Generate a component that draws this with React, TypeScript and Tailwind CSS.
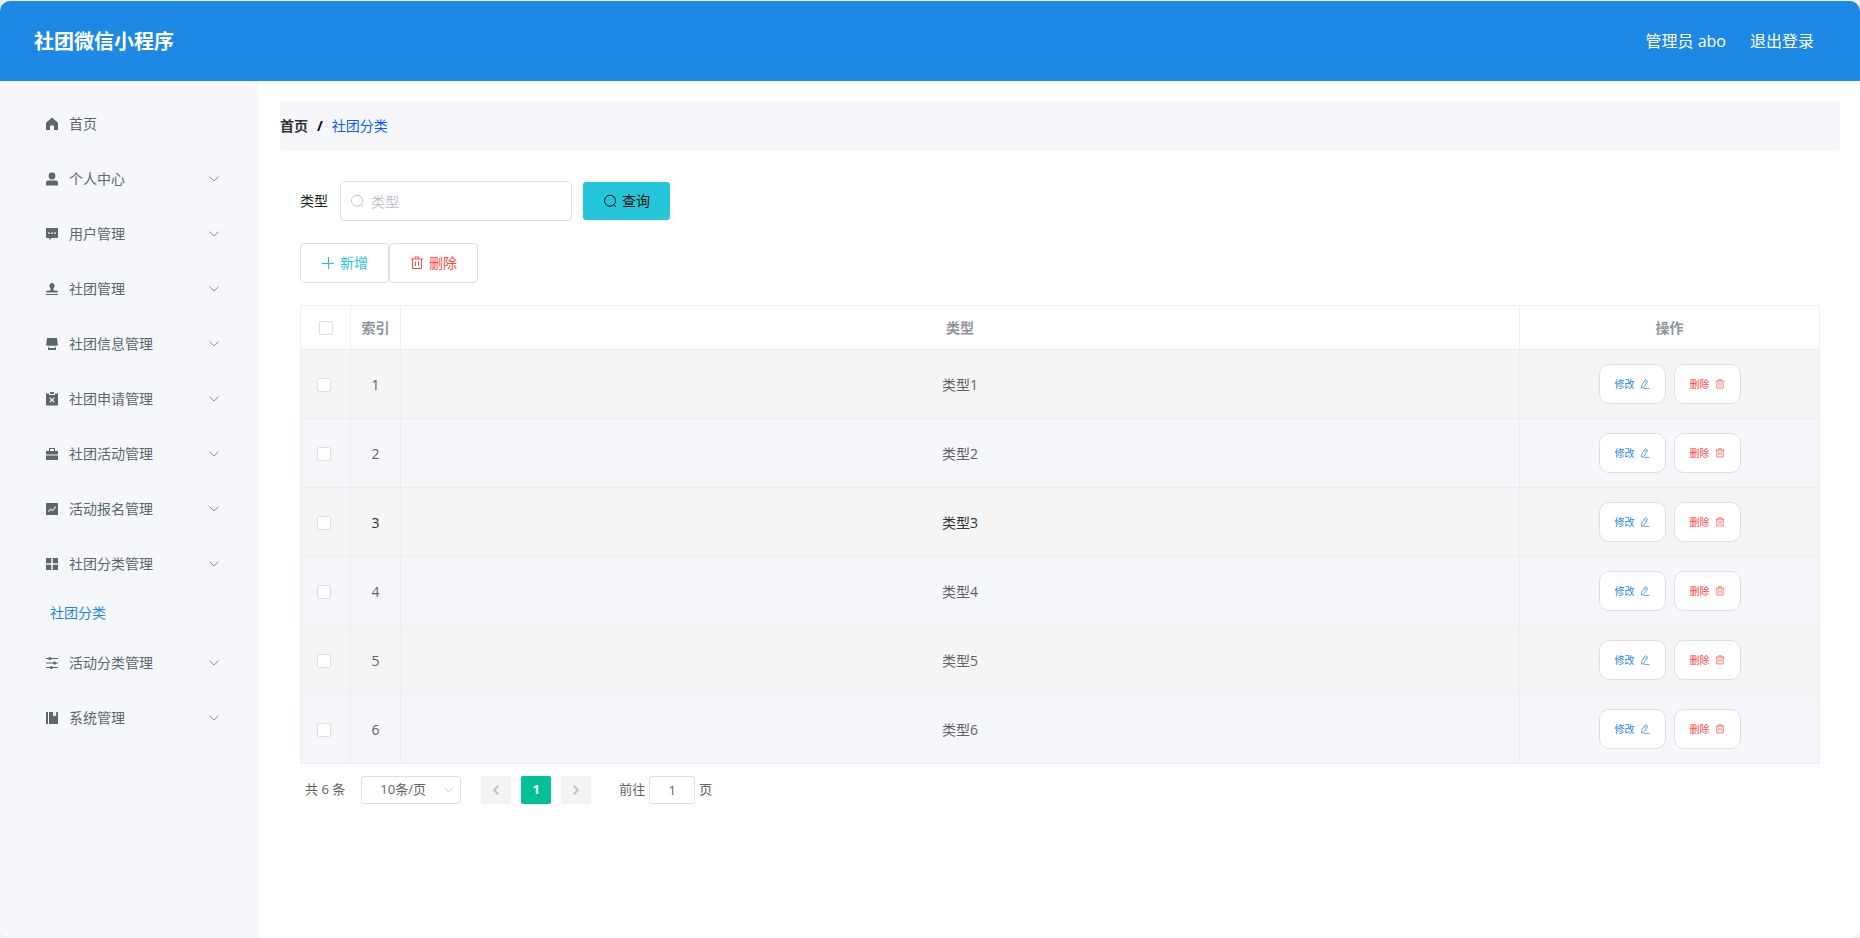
import type { ReactNode } from "react";

const ROWS = [1, 2, 3, 4, 5, 6];

function HomeIcon() {
  return <path d="M6 -0.4 0 4.8V12H4V8.2a0.6 0.6 0 0 1 .6-.6H7.4a0.6 0.6 0 0 1 .6.6V12H12V4.8Z" />;
}

function UserIcon() {
  return (
    <>
      <circle cx="6" cy="3" r="3.4" />
      <path d="M0 12.4V9.8A2.2 2.2 0 0 1 2.2 7.6H9.8A2.2 2.2 0 0 1 12 9.8V12.4Z" />
    </>
  );
}

function CommentIcon() {
  return (
    <path
      fillRule="evenodd"
      d="M0 0H12V10H6L3.2 12V10H0ZM2.3 4.3V5.9H3.7V4.3ZM5.3 4.3V5.9H6.7V4.3ZM8.3 4.3V5.9H9.7V4.3Z"
    />
  );
}

function StampIcon() {
  return (
    <path d="M6 0A2.9 2.9 0 0 0 4.5 5.2V7.6H2A2 2 0 0 0 0 9.6H12A2 2 0 0 0 10 7.6H7.5V5.2A2.9 2.9 0 0 0 6 0ZM0 11H12V12H0Z" />
  );
}

function GoodsIcon() {
  return (
    <path
      d="M1 0H11L12 7.6H9.8L9.2 8.4 8.6 7.6H7.8L7.2 8.4 6.6 7.6H5.6L5 8.4 4.4 7.6H3.6L3 8.4 2.4 7.6H0ZM2 9.2H3V10H9V9.2H10V12H2Z"
    />
  );
}

function ClaimIcon() {
  return (
    <>
      <path d="M4-1H8V1H4Z" />
      <path
        fillRule="evenodd"
        d="M0 0.6H3V2H9V0.6H12V12.4H0ZM3.3 5 5.1 7 3.3 9 4.1 9.8 6 7.8 7.9 9.8 8.7 9 6.9 7 8.7 5 7.9 4.2 6 6.2 4.1 4.2Z"
      />
    </>
  );
}

function CaseIcon() {
  return (
    <path
      fillRule="evenodd"
      d="M3 0H9V3H12V6.4H0V3H3ZM4.1 1.1V3H7.9V1.1ZM0 7.4H12V12H0Z"
    />
  );
}

function MarketingIcon() {
  return (
    <path
      fillRule="evenodd"
      d="M0 0H12V12H0ZM2 8.2 2.7 9 4.9 6.8 6.6 8.2 9 5.2 9.4 5.6 10 3.6 8 4 8.5 4.4 6.4 6.9 4.8 5.6Z"
    />
  );
}

function MenuIcon() {
  return <path d="M0 0H5.2V5.2H0ZM6.8 0H12V5.2H6.8ZM0 6.8H5.2V12H0ZM6.8 6.8H12V12H6.8Z" />;
}

function OperationIcon() {
  return (
    <>
      <path d="M0 1H12V2H0ZM0 5.5H12V6.5H0ZM0 10H12V11H0Z" />
      <circle cx="4" cy="1.5" r="1.5" />
      <circle cx="8.6" cy="6" r="1.5" />
      <circle cx="5.4" cy="10.5" r="1.5" />
    </>
  );
}

function ManagementIcon() {
  return <path d="M0 0H2V12H0ZM3 0H7V4.6L8.6 3.4 10.2 4.6V0H12V12H3Z" />;
}

const MENU: { label: string; icon: ReactNode; leaf?: boolean; children?: string[] }[] = [
  { label: "首页", icon: <HomeIcon />, leaf: true },
  { label: "个人中心", icon: <UserIcon /> },
  { label: "用户管理", icon: <CommentIcon /> },
  { label: "社团管理", icon: <StampIcon /> },
  { label: "社团信息管理", icon: <GoodsIcon /> },
  { label: "社团申请管理", icon: <ClaimIcon /> },
  { label: "社团活动管理", icon: <CaseIcon /> },
  { label: "活动报名管理", icon: <MarketingIcon /> },
  { label: "社团分类管理", icon: <MenuIcon />, children: ["社团分类"] },
  { label: "活动分类管理", icon: <OperationIcon /> },
  { label: "系统管理", icon: <ManagementIcon /> },
];

function Chevron({ className }: { className: string }) {
  return (
    <svg viewBox="0 0 10 6" fill="none" stroke="currentColor" className={className} aria-hidden="true">
      <path d="M0.5 0.6 5 5 9.5 0.6" />
    </svg>
  );
}

function SearchIcon() {
  return (
    <svg viewBox="0 0 14 14" fill="none" stroke="currentColor" className="size-[14px]" aria-hidden="true">
      <circle cx="7" cy="6.7" r="5.5" />
      <path d="M11 10.8 12.8 12.8" />
    </svg>
  );
}

function TrashIcon({ className }: { className: string }) {
  return (
    <svg viewBox="0 0 14 14" fill="none" stroke="currentColor" className={className} aria-hidden="true">
      <path d="M1 3H13M5 2.8V1H9V2.8M2.5 3V12.5H11.5V3M5.5 5.5V10M8.5 5.5V10" />
    </svg>
  );
}

function EditIcon() {
  return (
    <svg viewBox="0 0 14 14" fill="none" stroke="currentColor" className="size-[10px]" aria-hidden="true">
      <path d="M7.4 1 10.8 3 5.6 11.4 2 13 2.2 9.2ZM6 3.4 9.2 5.4M5.4 13.2H13.4" />
    </svg>
  );
}

function Checkbox({ label }: { label: string }) {
  return (
    <input
      type="checkbox"
      aria-label={label}
      className="block size-[14px] appearance-none rounded-[2px] border border-[#dcdfe6] bg-white checked:bg-[#1e88e5]"
    />
  );
}

function Sidebar() {
  return (
    <nav className="w-[258px] shrink-0 bg-[#f5f7fb] pt-[15px] text-sm text-[#5b666d]">
      <ul>
        {MENU.map((item) => (
          <li key={item.label}>
            <a href="#" className="flex h-[55px] items-center pr-[39px] pl-[46px]">
              <svg viewBox="0 0 12 12" fill="currentColor" className="size-3 overflow-visible" aria-hidden="true">
                {item.icon}
              </svg>
              <span className="ml-[11px]">{item.label}</span>
              {!item.leaf && <Chevron className="ml-auto h-[6px] w-[10px] text-[#8a9197]" />}
            </a>
            {item.children?.map((child) => (
              <a key={child} href="#" className="flex h-11 items-center pl-[50px] text-[#1e88e5]">
                {child}
              </a>
            ))}
          </li>
        ))}
      </ul>
    </nav>
  );
}

function DataTable() {
  return (
    <table className="mt-[22px] w-full table-fixed border-collapse border border-[#ebeef5] text-sm text-[#606266] [&_td]:border [&_td]:border-[#ebeef5] [&_th]:border [&_th]:border-[#ebeef5]">
      <colgroup>
        <col className="w-[50px]" />
        <col className="w-[50px]" />
        <col />
        <col className="w-[300px]" />
      </colgroup>
      <thead>
        <tr className="h-11 text-[#909399]">
          <th className="pl-[18px]">
            <Checkbox label="全选" />
          </th>
          <th className="font-bold">索引</th>
          <th className="font-bold">类型</th>
          <th className="font-bold">操作</th>
        </tr>
      </thead>
      <tbody className="text-center">
        {ROWS.map((n) => (
          <tr
            key={n}
            className={`h-[69px] odd:bg-[#f5f5f5] even:bg-[#f5f7fb] ${n === 3 ? "text-[#303133]" : ""}`}
          >
            <td className="pt-px pl-4">
              <Checkbox label={`选择类型${n}`} />
            </td>
            <td className="pt-px">{n}</td>
            <td className="pt-px">类型{n}</td>
            <td>
              <div className="flex justify-center gap-2 text-[10px]">
                <button className="flex h-10 w-[67px] items-center justify-center gap-[5px] rounded-[10px] border border-[#dcdfe6] bg-white text-[#1e88e5]">
                  修改
                  <EditIcon />
                </button>
                <button className="flex h-10 w-[67px] items-center justify-center gap-[5px] rounded-[10px] border border-[#dcdfe6] bg-white text-[#ff4949]">
                  删除
                  <TrashIcon className="size-[10px]" />
                </button>
              </div>
            </td>
          </tr>
        ))}
      </tbody>
    </table>
  );
}

function Pagination() {
  return (
    <div className="flex items-center pt-3 pl-[5px] text-[13px] text-[#606266]">
      <span>共 6 条</span>
      <div className="relative ml-4 flex items-center">
        <select
          aria-label="每页条数"
          className="h-7 w-[100px] appearance-none rounded-[3px] border border-[#dcdfe6] bg-white pr-4 text-center"
        >
          <option>10条/页</option>
          <option>20条/页</option>
        </select>
        <Chevron className="pointer-events-none absolute right-2 h-[6px] w-[9px] text-[#c0c4cc]" />
      </div>
      <div className="ml-5 flex gap-[10px]">
        <button aria-label="上一页" className="flex h-7 w-[30px] items-center justify-center rounded-[2px] bg-[#f4f4f5]">
          <Chevron className="h-[6px] w-[10px] rotate-90 stroke-2 text-[#c0c4cc]" />
        </button>
        <button className="h-7 w-[30px] rounded-[2px] bg-[#00c292] font-bold text-white">1</button>
        <button aria-label="下一页" className="flex h-7 w-[30px] items-center justify-center rounded-[2px] bg-[#f4f4f5]">
          <Chevron className="h-[6px] w-[10px] -rotate-90 stroke-2 text-[#c0c4cc]" />
        </button>
      </div>
      <label className="ml-7 flex items-center gap-1">
        前往
        <input
          defaultValue="1"
          className="h-7 w-[46px] rounded-[3px] border border-[#dcdfe6] bg-white text-center"
        />
        页
      </label>
    </div>
  );
}

export default function App() {
  return (
    <div className="flex min-h-screen flex-col bg-[#eef0f2] pt-px font-['Open_Sans','Noto_Sans_CJK_SC',sans-serif]">
      <header className="flex h-20 items-center justify-between rounded-t-[10px] bg-[#1e88e5] pr-[46px] pl-[34px] text-white">
        <h1 className="pt-[2px] text-xl font-bold">社团微信小程序</h1>
        <div className="flex gap-6 text-base">
          <span>管理员 abo</span>
          <a href="#">退出登录</a>
        </div>
      </header>

      <div className="flex grow overflow-hidden rounded-b-[10px] bg-white">
        <Sidebar />
        <main className="min-w-0 grow py-5 pr-5 pl-[22px]">
          <div className="flex h-[50px] items-center rounded bg-[#f5f7fb] text-sm">
            <a href="#" className="font-bold text-[#303133]">首页</a>
            <span className="mx-[9px] font-bold text-black">/</span>
            <span className="text-[#0b5cff]">社团分类</span>
          </div>

          <div className="px-5 pt-[30px]">
            <form className="flex items-center text-sm text-[#222]">
              <label htmlFor="type-query">类型</label>
              <div className="relative ml-3 flex items-center">
                <span className="absolute left-[10px] text-[#c0c4cc]">
                  <SearchIcon />
                </span>
                <input
                  id="type-query"
                  placeholder="类型"
                  className="h-10 w-[232px] rounded border border-[#dcdfe6] bg-white pl-[30px] placeholder:text-[#c0c4cc]"
                />
              </div>
              <button
                type="button"
                className="ml-[11px] flex h-[38px] w-[87px] items-center justify-center gap-[5px] rounded-[3px] bg-[#26c6da] text-[#111]"
              >
                <SearchIcon />
                查询
              </button>
            </form>

            <div className="mt-[22px] flex text-sm">
              <button className="flex h-10 w-[89px] items-center justify-center gap-[5px] rounded border border-[#dcdfe6] text-[#26c6da]">
                <svg viewBox="0 0 14 14" stroke="currentColor" className="size-[14px]" aria-hidden="true">
                  <path d="M1 7.5H13M7.5 1V13" />
                </svg>
                新增
              </button>
              <button className="flex h-10 w-[89px] items-center justify-center gap-[5px] rounded border border-[#dcdfe6] text-[#ff4949]">
                <TrashIcon className="size-[14px]" />
                删除
              </button>
            </div>

            <DataTable />
            <Pagination />
          </div>
        </main>
      </div>
    </div>
  );
}
